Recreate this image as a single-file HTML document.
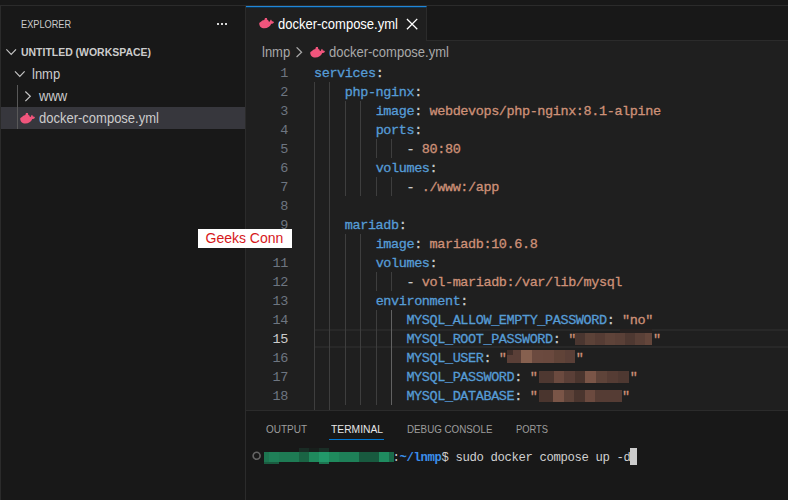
<!DOCTYPE html>
<html><head><meta charset="utf-8"><title>docker-compose.yml</title>
<style>
*{box-sizing:border-box;margin:0;padding:0}
html,body{width:788px;height:500px;overflow:hidden;background:#181818}
body{position:relative;font-family:"Liberation Sans",sans-serif;font-size:13px;color:#ccc}
.abs{position:absolute}
.t{position:absolute;white-space:pre;transform-origin:0 50%;line-height:22px;height:22px}
#topline{left:0;top:5px;width:788px;height:1px;background:#2b2b2b}
#leftline{left:0;top:5px;width:1px;height:495px;background:#2b2b2b}
#sideborder{left:245px;top:6px;width:1px;height:494px;background:#2b2b2b}
#editor{left:246px;top:6px;width:542px;height:404px;background:#1f1f1f}
#tabbar{left:246px;top:6px;width:542px;height:35px;background:#181818;border-bottom:1px solid #2b2b2b}
#tab{left:246px;top:6px;width:181px;height:35px;background:#1f1f1f;border-top:1px solid #2186d6;border-right:1px solid #2b2b2b}
#panelborder{left:246px;top:410px;width:542px;height:1px;background:#2b2b2b}
#sel{left:1px;top:107px;width:244px;height:22px;background:#37373d}
#treeguide{left:17px;top:85px;width:1px;height:44px;background:#585858}
.t13{font-size:14px;transform:scaleX(.9286)}
.code{-webkit-text-stroke:0.3px;position:absolute;left:314px;white-space:pre;font-family:"Liberation Mono",monospace;font-size:13.5px;height:19px;line-height:19px;letter-spacing:-0.4px}
.ln{position:absolute;left:246px;width:42px;text-align:right;font-family:"Liberation Mono",monospace;font-size:13.5px;height:19px;line-height:19px;letter-spacing:-0.4px;color:#6e7681}
.k{color:#569cd6}.s{color:#ce9178}.p{color:#ccc}
.g{position:absolute;width:1px;background:#3e3e3e}
.px{position:absolute}
</style></head><body>
<div class="abs" id="topline"></div>
<div class="abs" id="leftline"></div>
<div class="abs" id="sel"></div>
<div class="abs" id="treeguide"></div>

<!-- sidebar -->
<div class="t" id="s_explorer" style="left:21px;top:13px;font-size:11px;color:#ccc;transform:scaleX(.835)">EXPLORER</div>
<div class="t" id="s_untitled" style="left:21px;top:41px;font-size:11px;font-weight:bold;color:#ccc;transform:scaleX(.951)">UNTITLED (WORKSPACE)</div>
<div class="t t13" id="s_lnmp" style="left:32px;top:63px;color:#ccc">lnmp</div>
<div class="t t13" id="s_www" style="left:39px;top:85px;color:#ccc">www</div>
<div class="t t13" id="s_dc" style="left:39px;top:107px;color:#ccc">docker-compose.yml</div>

<div class="abs" id="sideborder"></div>
<div class="abs" id="editor"></div>
<div class="abs" id="tabbar"></div>
<div class="abs" id="tab"></div>
<div class="abs" id="tabglow" style="left:246px;top:7px;width:180px;height:1px;background:#0b3556"></div>
<div class="t t13" id="tabtext" style="left:278px;top:13px;color:#fff">docker-compose.yml</div>
<div class="t t13" id="bc1" style="left:262px;top:41px;color:#a9a9a9">lnmp</div>
<div class="t t13" id="bc2" style="left:329px;top:41px;color:#a9a9a9">docker-compose.yml</div>

<div class="abs" id="curline" style="left:314px;top:329px;width:474px;height:19px;border-top:2px solid #282828;border-bottom:2px solid #282828"></div>
<div class="g" style="left:314.0px;top:82px;height:19px;background:#3e3e3e"></div>
<div class="g" style="left:329.4px;top:82px;height:19px;background:#3e3e3e"></div>
<div class="g" style="left:314.0px;top:101px;height:19px;background:#3e3e3e"></div>
<div class="g" style="left:329.4px;top:101px;height:19px;background:#3e3e3e"></div>
<div class="g" style="left:344.8px;top:101px;height:19px;background:#3e3e3e"></div>
<div class="g" style="left:360.2px;top:101px;height:19px;background:#3e3e3e"></div>
<div class="g" style="left:314.0px;top:120px;height:19px;background:#3e3e3e"></div>
<div class="g" style="left:329.4px;top:120px;height:19px;background:#3e3e3e"></div>
<div class="g" style="left:344.8px;top:120px;height:19px;background:#3e3e3e"></div>
<div class="g" style="left:360.2px;top:120px;height:19px;background:#3e3e3e"></div>
<div class="g" style="left:314.0px;top:139px;height:19px;background:#3e3e3e"></div>
<div class="g" style="left:329.4px;top:139px;height:19px;background:#3e3e3e"></div>
<div class="g" style="left:344.8px;top:139px;height:19px;background:#3e3e3e"></div>
<div class="g" style="left:360.2px;top:139px;height:19px;background:#3e3e3e"></div>
<div class="g" style="left:375.6px;top:139px;height:19px;background:#3e3e3e"></div>
<div class="g" style="left:391.0px;top:139px;height:19px;background:#3e3e3e"></div>
<div class="g" style="left:314.0px;top:158px;height:19px;background:#3e3e3e"></div>
<div class="g" style="left:329.4px;top:158px;height:19px;background:#3e3e3e"></div>
<div class="g" style="left:344.8px;top:158px;height:19px;background:#3e3e3e"></div>
<div class="g" style="left:360.2px;top:158px;height:19px;background:#3e3e3e"></div>
<div class="g" style="left:314.0px;top:177px;height:19px;background:#3e3e3e"></div>
<div class="g" style="left:329.4px;top:177px;height:19px;background:#3e3e3e"></div>
<div class="g" style="left:344.8px;top:177px;height:19px;background:#3e3e3e"></div>
<div class="g" style="left:360.2px;top:177px;height:19px;background:#3e3e3e"></div>
<div class="g" style="left:375.6px;top:177px;height:19px;background:#3e3e3e"></div>
<div class="g" style="left:391.0px;top:177px;height:19px;background:#3e3e3e"></div>
<div class="g" style="left:314.0px;top:196px;height:19px;background:#3e3e3e"></div>
<div class="g" style="left:329.4px;top:196px;height:19px;background:#3e3e3e"></div>
<div class="g" style="left:314.0px;top:215px;height:19px;background:#3e3e3e"></div>
<div class="g" style="left:329.4px;top:215px;height:19px;background:#3e3e3e"></div>
<div class="g" style="left:314.0px;top:234px;height:19px;background:#3e3e3e"></div>
<div class="g" style="left:329.4px;top:234px;height:19px;background:#3e3e3e"></div>
<div class="g" style="left:344.8px;top:234px;height:19px;background:#3e3e3e"></div>
<div class="g" style="left:360.2px;top:234px;height:19px;background:#3e3e3e"></div>
<div class="g" style="left:314.0px;top:253px;height:19px;background:#3e3e3e"></div>
<div class="g" style="left:329.4px;top:253px;height:19px;background:#3e3e3e"></div>
<div class="g" style="left:344.8px;top:253px;height:19px;background:#3e3e3e"></div>
<div class="g" style="left:360.2px;top:253px;height:19px;background:#3e3e3e"></div>
<div class="g" style="left:314.0px;top:272px;height:19px;background:#3e3e3e"></div>
<div class="g" style="left:329.4px;top:272px;height:19px;background:#3e3e3e"></div>
<div class="g" style="left:344.8px;top:272px;height:19px;background:#3e3e3e"></div>
<div class="g" style="left:360.2px;top:272px;height:19px;background:#3e3e3e"></div>
<div class="g" style="left:375.6px;top:272px;height:19px;background:#3e3e3e"></div>
<div class="g" style="left:391.0px;top:272px;height:19px;background:#3e3e3e"></div>
<div class="g" style="left:314.0px;top:291px;height:19px;background:#3e3e3e"></div>
<div class="g" style="left:329.4px;top:291px;height:19px;background:#3e3e3e"></div>
<div class="g" style="left:344.8px;top:291px;height:19px;background:#3e3e3e"></div>
<div class="g" style="left:360.2px;top:291px;height:19px;background:#3e3e3e"></div>
<div class="g" style="left:314.0px;top:310px;height:19px;background:#3e3e3e"></div>
<div class="g" style="left:329.4px;top:310px;height:19px;background:#3e3e3e"></div>
<div class="g" style="left:344.8px;top:310px;height:19px;background:#3e3e3e"></div>
<div class="g" style="left:360.2px;top:310px;height:19px;background:#3e3e3e"></div>
<div class="g" style="left:375.6px;top:310px;height:19px;background:#3e3e3e"></div>
<div class="g" style="left:391.0px;top:310px;height:19px;background:#626262"></div>
<div class="g" style="left:314.0px;top:329px;height:19px;background:#3e3e3e"></div>
<div class="g" style="left:329.4px;top:329px;height:19px;background:#3e3e3e"></div>
<div class="g" style="left:344.8px;top:329px;height:19px;background:#3e3e3e"></div>
<div class="g" style="left:360.2px;top:329px;height:19px;background:#3e3e3e"></div>
<div class="g" style="left:375.6px;top:329px;height:19px;background:#3e3e3e"></div>
<div class="g" style="left:391.0px;top:329px;height:19px;background:#626262"></div>
<div class="g" style="left:314.0px;top:348px;height:19px;background:#3e3e3e"></div>
<div class="g" style="left:329.4px;top:348px;height:19px;background:#3e3e3e"></div>
<div class="g" style="left:344.8px;top:348px;height:19px;background:#3e3e3e"></div>
<div class="g" style="left:360.2px;top:348px;height:19px;background:#3e3e3e"></div>
<div class="g" style="left:375.6px;top:348px;height:19px;background:#3e3e3e"></div>
<div class="g" style="left:391.0px;top:348px;height:19px;background:#626262"></div>
<div class="g" style="left:314.0px;top:367px;height:19px;background:#3e3e3e"></div>
<div class="g" style="left:329.4px;top:367px;height:19px;background:#3e3e3e"></div>
<div class="g" style="left:344.8px;top:367px;height:19px;background:#3e3e3e"></div>
<div class="g" style="left:360.2px;top:367px;height:19px;background:#3e3e3e"></div>
<div class="g" style="left:375.6px;top:367px;height:19px;background:#3e3e3e"></div>
<div class="g" style="left:391.0px;top:367px;height:19px;background:#626262"></div>
<div class="g" style="left:314.0px;top:386px;height:19px;background:#3e3e3e"></div>
<div class="g" style="left:329.4px;top:386px;height:19px;background:#3e3e3e"></div>
<div class="g" style="left:344.8px;top:386px;height:19px;background:#3e3e3e"></div>
<div class="g" style="left:360.2px;top:386px;height:19px;background:#3e3e3e"></div>
<div class="g" style="left:375.6px;top:386px;height:19px;background:#3e3e3e"></div>
<div class="g" style="left:391.0px;top:386px;height:19px;background:#626262"></div>
<div class="g" style="left:314.0px;top:405px;height:5px"></div>
<div class="g" style="left:329.4px;top:405px;height:5px"></div>
<div class="ln" style="top:64px">1</div>
<div class="code" style="top:64px"><span class="k">services</span><span class="p">:</span></div>
<div class="ln" style="top:83px">2</div>
<div class="code" style="top:83px">    <span class="k">php-nginx</span><span class="p">:</span></div>
<div class="ln" style="top:102px">3</div>
<div class="code" style="top:102px">        <span class="k">image</span><span class="p">:</span> <span class="s">webdevops/php-nginx:8.1-alpine</span></div>
<div class="ln" style="top:121px">4</div>
<div class="code" style="top:121px">        <span class="k">ports</span><span class="p">:</span></div>
<div class="ln" style="top:140px">5</div>
<div class="code" style="top:140px">            <span class="p">-</span> <span class="s">80:80</span></div>
<div class="ln" style="top:159px">6</div>
<div class="code" style="top:159px">        <span class="k">volumes</span><span class="p">:</span></div>
<div class="ln" style="top:178px">7</div>
<div class="code" style="top:178px">            <span class="p">-</span> <span class="s">./www:/app</span></div>
<div class="ln" style="top:197px">8</div>
<div class="ln" style="top:216px">9</div>
<div class="code" style="top:216px">    <span class="k">mariadb</span><span class="p">:</span></div>
<div class="ln" style="top:235px">10</div>
<div class="code" style="top:235px">        <span class="k">image</span><span class="p">:</span> <span class="s">mariadb:10.6.8</span></div>
<div class="ln" style="top:254px">11</div>
<div class="code" style="top:254px">        <span class="k">volumes</span><span class="p">:</span></div>
<div class="ln" style="top:273px">12</div>
<div class="code" style="top:273px">            <span class="p">-</span> <span class="s">vol-mariadb:/var/lib/mysql</span></div>
<div class="ln" style="top:292px">13</div>
<div class="code" style="top:292px">        <span class="k">environment</span><span class="p">:</span></div>
<div class="ln" style="top:311px">14</div>
<div class="code" style="top:311px">            <span class="k">MYSQL_ALLOW_EMPTY_PASSWORD</span><span class="p">:</span> <span class="s">"no"</span></div>
<div class="ln" style="top:330px;color:#ccc">15</div>
<div class="code" style="top:330px">            <span class="k">MYSQL_ROOT_PASSWORD</span><span class="p">:</span> <span class="s">"</span>          <span class="s">"</span></div>
<div class="ln" style="top:349px">16</div>
<div class="code" style="top:349px">            <span class="k">MYSQL_USER</span><span class="p">:</span> <span class="s">"</span>         <span class="s">"</span></div>
<div class="ln" style="top:368px">17</div>
<div class="code" style="top:368px">            <span class="k">MYSQL_PASSWORD</span><span class="p">:</span> <span class="s">"</span>            <span class="s">"</span></div>
<div class="ln" style="top:387px">18</div>
<div class="code" style="top:387px">            <span class="k">MYSQL_DATABASE</span><span class="p">:</span> <span class="s">"</span>           <span class="s">"</span></div>
<div class="px" style="left:620.0px;top:328.5px;width:32.0px;height:4.0px;background:linear-gradient(90deg,#272120 0.0px,#272120 32.0px)"></div>
<div class="px" style="left:574.8px;top:332.5px;width:77.2px;height:12.5px;background:linear-gradient(90deg,#4a3630 0.0px,#4a3630 10.0px,#5c4238 10.0px,#5c4238 20.0px,#553c34 20.0px,#553c34 30.0px,#5e4339 30.0px,#5e4339 40.0px,#5a4037 40.0px,#5a4037 50.0px,#4e3831 50.0px,#4e3831 60.0px,#5a4037 60.0px,#5a4037 70.0px,#64463b 70.0px,#64463b 77.2px)"></div>
<div class="px" style="left:507.0px;top:350.2px;width:68.3px;height:12.5px;background:linear-gradient(90deg,#5a3f37 0.0px,#5a3f37 14.0px,#86604f 14.0px,#86604f 25.0px,#6b4a3f 25.0px,#6b4a3f 36.0px,#6a493e 36.0px,#6a493e 47.0px,#604338 47.0px,#604338 58.0px,#5a3f37 58.0px,#5a3f37 68.3px)"></div>
<div class="px" style="left:507.0px;top:350.2px;width:6.0px;height:5.0px;background:linear-gradient(90deg,#3f2e29 0.0px,#3f2e29 6.0px)"></div>
<div class="px" style="left:539.2px;top:371.3px;width:89.6px;height:12.0px;background:linear-gradient(90deg,#4e3831 0.0px,#4e3831 15.0px,#6b4a3f 15.0px,#6b4a3f 25.0px,#5a3f37 25.0px,#5a3f37 36.0px,#4a352e 36.0px,#4a352e 46.0px,#7a5547 46.0px,#7a5547 57.0px,#5e4339 57.0px,#5e4339 68.0px,#553c34 68.0px,#553c34 79.0px,#4e3831 79.0px,#4e3831 89.6px)"></div>
<div class="px" style="left:539.2px;top:389.6px;width:83.1px;height:12.4px;background:linear-gradient(90deg,#4a352e 0.0px,#4a352e 14.0px,#7a5547 14.0px,#7a5547 25.0px,#5e4339 25.0px,#5e4339 35.0px,#4a352e 35.0px,#4a352e 46.0px,#6b4a3f 46.0px,#6b4a3f 56.0px,#553c34 56.0px,#553c34 83.1px)"></div>
<div class="px" style="left:299.0px;top:448.0px;width:30.0px;height:4.0px;background:linear-gradient(90deg,#1a2c25 0.0px,#1a2c25 10.0px,#181f1c 10.0px,#181f1c 20.0px,#1a2e26 20.0px,#1a2e26 30.0px)"></div>
<div class="px" style="left:264.0px;top:452.0px;width:130.2px;height:10.4px;background:linear-gradient(90deg,#1d7550 0.0px,#1d7550 4.8px,#1f8058 4.8px,#1f8058 14.6px,#1e7b54 14.6px,#1e7b54 35.3px,#1a6444 35.3px,#1a6444 45.0px,#1f8a5d 45.0px,#1f8a5d 55.2px,#22996a 55.2px,#22996a 64.9px,#1f8a5d 64.9px,#1f8a5d 75.5px,#1e8058 75.5px,#1e8058 94.8px,#185a3f 94.8px,#185a3f 115.1px,#1f8c60 115.1px,#1f8c60 125.2px,#1a6a49 125.2px,#1a6a49 130.2px)"></div>
<div class="px" style="left:264.0px;top:462.4px;width:14.6px;height:1.2px;background:linear-gradient(90deg,#1a5c40 0.0px,#1a5c40 14.6px)"></div>
<div class="px" style="left:319.2px;top:462.4px;width:9.7px;height:1.2px;background:linear-gradient(90deg,#1c7550 0.0px,#1c7550 9.7px)"></div>

<!-- panel -->
<div class="abs" id="panelborder"></div>
<div class="t" id="p_out" style="left:266px;top:418px;font-size:11px;color:#9d9d9d;transform:scaleX(.906)">OUTPUT</div>
<div class="t" id="p_term" style="left:331px;top:418px;font-size:11px;color:#e7e7e7;transform:scaleX(.935)">TERMINAL</div>
<div class="abs" id="p_ul" style="left:329px;top:439px;width:55px;height:1px;background:#0078d4"></div>
<div class="t" id="p_dbg" style="left:406.5px;top:418px;font-size:11px;color:#9d9d9d;transform:scaleX(.89)">DEBUG CONSOLE</div>
<div class="t" id="p_ports" style="left:516px;top:418px;font-size:11px;color:#9d9d9d;transform:scaleX(.85)">PORTS</div>

<div class="t" id="term" style="left:392.6px;top:447px;font-family:'Liberation Mono',monospace;font-size:12.3px;letter-spacing:-0.38px;color:#d0d0d0"><span>:</span><span style="color:#3b8eea;font-weight:bold">~/lnmp</span>$ sudo docker compose up -d</div>
<div class="abs" id="cursor" style="left:630px;top:448px;width:7px;height:17px;background:#ccc"></div>

<svg class="abs" id="icons" style="left:0;top:0" width="788" height="500" viewBox="0 0 788 500">
<g fill="none" stroke="#c5c5c5" stroke-width="1.2" stroke-linecap="square" stroke-linejoin="miter">
<path d="M6.8 49.8 L11.2 54.3 L15.6 49.8"/>
<path d="M15.4 71.8 L19.8 76.3 L24.2 71.8"/>
<path d="M25.8 91.9 L30.3 96.3 L25.8 100.7"/>
<path d="M297 47.8 L301.6 52.2 L297 56.6" stroke="#a9a9a9"/>
<path d="M407.4 19.4 L416.8 28.8 M416.8 19.4 L407.4 28.8" stroke="#ffffff" stroke-width="1.3"/>
</g>
<rect x="217" y="23" width="2" height="2" fill="#d7d7d7"/><rect x="221" y="23" width="2" height="2" fill="#d7d7d7"/><rect x="225" y="23" width="2" height="2" fill="#d7d7d7"/>
<path transform="translate(259 17.8)" d="M0.2 5.4 C0.6 4.6 2.4 3.8 3.3 2.7 L5.3 2.1 L6.0 0.1 L7.9 0.1 L8.3 1.9 L9.4 2.6 L9.9 4.0 L10.9 3.7 C11.1 2.8 11.4 2.2 12.0 1.8 C12.6 2.4 12.9 3.0 12.9 3.5 C13.8 3.3 14.6 3.7 15.0 4.4 C14.4 5.5 13.4 5.9 12.3 5.9 C11.0 8.8 8.6 10.4 5.4 10.4 C2.2 10.4 0.2 8.4 0.2 5.4 Z" fill="#f0557c"/>
<path transform="translate(20 113)" d="M0.2 5.4 C0.6 4.6 2.4 3.8 3.3 2.7 L5.3 2.1 L6.0 0.1 L7.9 0.1 L8.3 1.9 L9.4 2.6 L9.9 4.0 L10.9 3.7 C11.1 2.8 11.4 2.2 12.0 1.8 C12.6 2.4 12.9 3.0 12.9 3.5 C13.8 3.3 14.6 3.7 15.0 4.4 C14.4 5.5 13.4 5.9 12.3 5.9 C11.0 8.8 8.6 10.4 5.4 10.4 C2.2 10.4 0.2 8.4 0.2 5.4 Z" fill="#f0557c"/>
<path transform="translate(310 47)" d="M0.2 5.4 C0.6 4.6 2.4 3.8 3.3 2.7 L5.3 2.1 L6.0 0.1 L7.9 0.1 L8.3 1.9 L9.4 2.6 L9.9 4.0 L10.9 3.7 C11.1 2.8 11.4 2.2 12.0 1.8 C12.6 2.4 12.9 3.0 12.9 3.5 C13.8 3.3 14.6 3.7 15.0 4.4 C14.4 5.5 13.4 5.9 12.3 5.9 C11.0 8.8 8.6 10.4 5.4 10.4 C2.2 10.4 0.2 8.4 0.2 5.4 Z" fill="#f0557c"/>
<circle cx="256.6" cy="455.8" r="3.5" fill="none" stroke="#646464" stroke-width="1.6"/>
</svg>
<!-- watermark -->
<div class="abs" id="wm" style="left:198px;top:229px;width:94px;height:19px;background:#fff"></div>
<div class="t" id="wmt" style="left:205.5px;top:227px;font-size:14px;color:#d6181b">Geeks Conn</div>
</body></html>
